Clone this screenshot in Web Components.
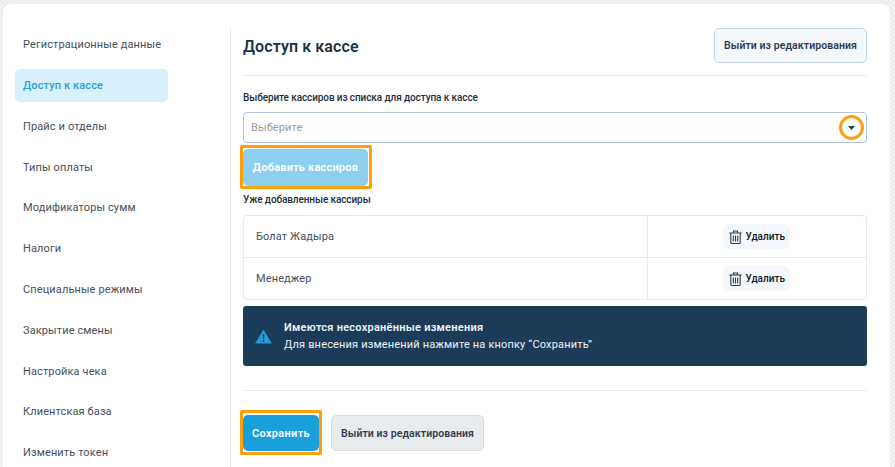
<!DOCTYPE html>
<html lang="ru"><head><meta charset="utf-8"><style>
html,body{margin:0;height:467px;overflow:hidden}
body{font-family:Roboto,"Liberation Sans",sans-serif;background-color:#f1f1f1;background-image:linear-gradient(135deg,#e9e9e9 25%,#f6f6f6 25%,#f6f6f6 50%,#e9e9e9 50%,#e9e9e9 75%,#f6f6f6 75%);background-size:4px 4px}
</style></head><body>
<template id="t-card"><style>
:host{display:flex;box-sizing:border-box;margin:4px 0 0 3px;width:887px;height:463px;overflow:hidden;background:#fff;border-radius:8px 8px 0 0}
</style><slot name="side"></slot><slot></slot></template>

<template id="t-nav"><style>
:host{display:flex;flex-direction:column;flex:none;box-sizing:border-box;width:227px;padding:24.3px 62px 0 12px;gap:7.8px}
</style><slot></slot></template>

<template id="t-navitem"><style>
:host{display:flex;align-items:center;flex:none;height:33px;padding-left:8px;border-radius:5px;font-size:11px;color:#46505c;letter-spacing:.12px;white-space:nowrap}
:host([active]){background:#d8effc;color:#2a9fd8;font-weight:500}
</style><slot></slot></template>

<template id="t-main"><style>
:host{display:block;flex:none;box-sizing:border-box;width:637px;margin-top:23px;padding:0 0 0 12px;border-left:1px solid #e7e9ec;height:440px}
.head{display:flex;justify-content:space-between;align-items:center;box-sizing:border-box;height:49px;padding:1px 0 12px;border-bottom:1px solid #e8e9eb}
h1{margin:2px 0 0;font-size:16px;font-weight:600;color:#1f3346;letter-spacing:.1px}
.label{font-size:10px;font-weight:500;color:#1c2f42;letter-spacing:-.1px;line-height:14px}
.l1{margin-top:15px}
.l2{margin-top:7px}
.sel{margin-top:7px}
.add{margin-top:6px;display:flex}
.tbl{margin-top:8px}
.alert{margin-top:6px}
.sep{height:1px;background:#e8e9eb;margin-top:24px}
.foot{display:flex;align-items:center;gap:12px;margin-top:24px}
</style>
<div class="head"><h1>Доступ к кассе</h1><x-btn kind="light">Выйти из редактирования</x-btn></div>
<div class="label l1">Выберите кассиров из списка для доступа к кассе</div>
<x-select class="sel" placeholder="Выберите"></x-select>
<div class="add"><x-btn kind="pale" ring>Добавить кассиров</x-btn></div>
<div class="label l2">Уже добавленные кассиры</div>
<x-table class="tbl"><x-row>Болат Жадыра</x-row><x-row>Менеджер</x-row></x-table>
<x-alert class="alert" heading="Имеются несохранённые изменения">Для внесения изменений нажмите на кнопку “Сохранить”</x-alert>
<div class="sep"></div>
<div class="foot"><x-btn kind="primary" ring>Сохранить</x-btn><x-btn kind="gray">Выйти из редактирования</x-btn></div>
</template>

<template id="t-btn"><style>
:host{display:inline-flex;position:relative;align-items:center;justify-content:center;box-sizing:border-box;width:153px;height:36px;border-radius:5px;border:1px solid transparent;font-size:10.5px;font-weight:600;letter-spacing:.08px;white-space:nowrap;color:#2f3d50}
:host([kind=light]){background:#f4f8fc;border-color:#c5d3e6;height:35px}
:host([kind=gray]){background:#e9ecef;border-color:#d7dade}
:host([kind=pale]){background:#8ccfee;color:#fff;width:125px;height:37px;font-size:11px;letter-spacing:.2px}
:host([kind=primary]){background:#189fdc;color:#fff;width:76px;font-size:11px;letter-spacing:.3px}
:host([ring])::after{content:"";position:absolute;border:3px solid #ff9f0a;border-radius:2px}
:host([kind=pale])::after{inset:-5px -5px -4px -4px}
:host([kind=primary])::after{inset:-6px -4px -5px -4px}
</style><slot></slot></template>

<template id="t-select"><style>
:host{display:flex;align-items:center;justify-content:space-between;box-sizing:border-box;height:31px;border:1px solid #b3c2e2;border-radius:4px;padding:0 4px 0 7px;font-size:11px;color:#9b9b9b;letter-spacing:.12px}
.caret{display:flex;align-items:center;justify-content:center;box-sizing:border-box;width:25px;height:25px;border:3px solid #ff9f0a;border-radius:50%;margin:0 -1.500px 0 0}
svg{display:block}
</style><span id="p"></span><span class="caret"><svg width="7" height="4" viewBox="0 0 7 4"><path d="M0 0h7L3.500 4z" fill="#2d3a4a"/></svg></span></template>

<template id="t-table"><style>
:host{display:block;border:1px solid #e7e9ec;border-radius:4px}
</style><slot></slot></template>

<template id="t-row"><style>
:host{display:grid;grid-template-columns:404px 1fr;height:42px;box-sizing:border-box;border-bottom:1px solid #e7e9ec;font-size:11px;color:#46505c;letter-spacing:.12px}
:host(:last-child){border-bottom:0;height:41px}
.name{display:flex;align-items:center;padding-left:12px;border-right:1px solid #e7e9ec}
.act{display:flex;align-items:center;justify-content:center;padding-right:2px}
</style><div class="name"><slot></slot></div><div class="act"><x-del>Удалить</x-del></div></template>

<template id="t-del"><style>
:host{display:inline-flex;align-items:center;gap:4px;box-sizing:border-box;width:67px;height:25px;padding-left:6px;background:#f4f8fc;border-radius:6px;font-size:10px;font-weight:500;color:#0f1720;letter-spacing:0;white-space:nowrap}
svg{display:block;flex:none}
</style><svg width="13" height="14" viewBox="0 0 13 14" fill="none" stroke="#2b3a4b" stroke-width="1.100"><path d="M.3 3h12.400"/><path d="M4.500 2.800V1h4v1.800"/><path d="M1.800 3v9.700q0 .8.800.8h7.800q.8 0 .8-.8V3"/><path d="M4.300 5.500v6M6.500 5.500v6M8.700 5.500v6"/></svg><slot></slot></template>

<template id="t-alert"><style>
:host{display:flex;align-items:center;box-sizing:border-box;height:60px;padding-left:12px;gap:12px;background:#1a3c58;border-radius:3px;color:#eef3f7;font-size:11px;letter-spacing:.17px}
svg{display:block;flex:none}
.t{font-weight:600;line-height:17px;letter-spacing:.25px}
.d{line-height:17px}
</style><svg width="17" height="15" viewBox="0 0 17 15"><path d="M8.500 0.500L16.800 14.500H.2z" fill="#1f9be0"/><path d="M7.800 5h1.500l-.2 5.200H8z" fill="#1a3c58"/><circle cx="8.500" cy="12" r="1" fill="#1a3c58"/></svg><div><div class="t" id="title"></div><div class="d"><slot></slot></div></div></template>

<x-card>
<x-nav slot="side">
<x-navitem>Регистрационные данные</x-navitem>
<x-navitem active>Доступ к кассе</x-navitem>
<x-navitem>Прайс и отделы</x-navitem>
<x-navitem>Типы оплаты</x-navitem>
<x-navitem>Модификаторы сумм</x-navitem>
<x-navitem>Налоги</x-navitem>
<x-navitem>Специальные режимы</x-navitem>
<x-navitem>Закрытие смены</x-navitem>
<x-navitem>Настройка чека</x-navitem>
<x-navitem>Клиентская база</x-navitem>
<x-navitem>Изменить токен</x-navitem>
</x-nav>
<x-main></x-main>
</x-card>
<script>
function def(tag,tpl,init){customElements.define(tag,class extends HTMLElement{constructor(){super();const r=this.attachShadow({mode:'open'});r.appendChild(document.getElementById(tpl).content.cloneNode(true));}connectedCallback(){if(init)init(this)}})}
def('x-btn','t-btn');def('x-del','t-del');def('x-row','t-row');def('x-table','t-table');
def('x-select','t-select',e=>{e.shadowRoot.getElementById('p').textContent=e.getAttribute('placeholder')});
def('x-alert','t-alert',e=>{e.shadowRoot.getElementById('title').textContent=e.getAttribute('heading')});
def('x-navitem','t-navitem');def('x-nav','t-nav');def('x-main','t-main');def('x-card','t-card');
</script>
</body></html>
